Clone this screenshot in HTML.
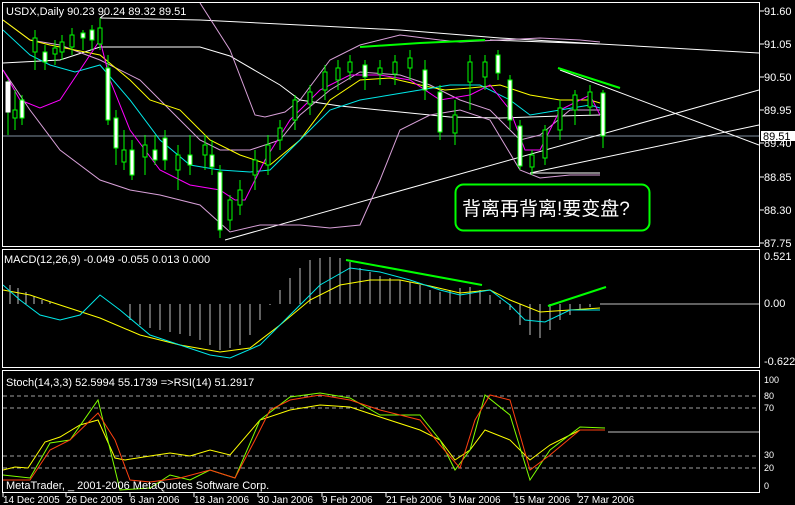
<!DOCTYPE html>
<html><head><meta charset="utf-8"><style>
html,body{margin:0;padding:0;background:#000;width:795px;height:505px;overflow:hidden}
svg{display:block;font-family:"Liberation Sans","Noto Sans CJK SC",sans-serif}
</style></head><body>
<svg width="795" height="505" viewBox="0 0 795 505" xmlns="http://www.w3.org/2000/svg">
<rect width="795" height="505" fill="#000"/>
<!-- panel borders -->
<g fill="none" stroke="#fff" stroke-width="1">
<rect x="2.5" y="2.5" width="757" height="244"/>
<rect x="2.5" y="249.5" width="757" height="118"/>
<rect x="2.5" y="370.5" width="757" height="122"/>
</g>
<!-- right axis -->
<g fill="#fff" font-size="11">
<g stroke="#fff"><line x1="760" y1="11" x2="764" y2="11"/><line x1="760" y1="44" x2="764" y2="44"/><line x1="760" y1="77" x2="764" y2="77"/><line x1="760" y1="110" x2="764" y2="110"/><line x1="760" y1="143" x2="764" y2="143"/><line x1="760" y1="177" x2="764" y2="177"/><line x1="760" y1="210" x2="764" y2="210"/><line x1="760" y1="243" x2="764" y2="243"/></g>
<text x="764" y="15">91.60</text><text x="764" y="48">91.05</text><text x="764" y="81">90.50</text><text x="764" y="114">89.95</text><text x="764" y="147">89.40</text><text x="764" y="181">88.85</text><text x="764" y="214">88.30</text><text x="764" y="247">87.75</text>
<rect x="761" y="131" width="34" height="10" fill="#fff"/><text x="763" y="140" fill="#000">89.51</text>
<text x="764" y="260">0.521</text><text x="764" y="307">0.00</text><text x="764" y="365">-0.622</text>
<text x="764" y="383" font-size="9">100</text><text x="764" y="399" font-size="9">80</text><text x="764" y="411" font-size="9">70</text><text x="764" y="458" font-size="9">30</text><text x="764" y="471" font-size="9">20</text><text x="764" y="489" font-size="9">0</text>
</g>
<!-- bottom dates -->
<g fill="#fff" font-size="10">
<text x="3" y="503">14 Dec 2005</text><text x="66" y="503">26 Dec 2005</text><text x="130" y="503">6 Jan 2006</text><text x="194" y="503">18 Jan 2006</text><text x="258" y="503">30 Jan 2006</text><text x="322" y="503">9 Feb 2006</text><text x="386" y="503">21 Feb 2006</text><text x="450" y="503">3 Mar 2006</text><text x="514" y="503">15 Mar 2006</text><text x="578" y="503">27 Mar 2006</text>
</g>
<g stroke="#fff"><line x1="3" y1="493" x2="3" y2="497"/><line x1="66" y1="493" x2="66" y2="497"/><line x1="130" y1="493" x2="130" y2="497"/><line x1="194" y1="493" x2="194" y2="497"/><line x1="258" y1="493" x2="258" y2="497"/><line x1="322" y1="493" x2="322" y2="497"/><line x1="386" y1="493" x2="386" y2="497"/><line x1="450" y1="493" x2="450" y2="497"/><line x1="514" y1="493" x2="514" y2="497"/><line x1="578" y1="493" x2="578" y2="497"/></g>

<!-- main panel -->
<svg x="3" y="3" width="756" height="243" viewBox="3 3 756 243" overflow="hidden">
<line x1="3" y1="136" x2="759" y2="136" stroke="#8090a0"/>
<!-- trend lines white -->
<g stroke="#fff" fill="none">
<polyline points="100,18 200,20 300,25 400,30 500,38 600,44 759,53"/>
<line x1="490" y1="40" x2="600" y2="44"/>
<line x1="225" y1="240" x2="759" y2="90"/>
<line x1="530" y1="173" x2="759" y2="125"/>
<line x1="560" y1="70" x2="759" y2="145"/>
<line x1="100" y1="18" x2="105" y2="14"/>
<line x1="530" y1="173" x2="600" y2="173"/>
<polyline points="3,63 60,60 100,47 200,47 230,56 280,85 300,100 340,106 400,112 450,117 500,118 560,116 600,115"/>
</g>
<!-- Bollinger pink -->
<g stroke="#d8a0d8" fill="none">
<polyline points="200,3 230,50 255,115 265,117 285,112 300,100 330,60 360,45 400,35 440,40 460,42 500,40 540,38 580,40 600,42"/>
<polyline points="3,70 30,110 60,150 100,180 130,190 160,195 200,205 230,232 260,225 300,225 330,228 360,225 380,180 400,130 430,115 460,110 490,120 520,170 540,178 570,175 600,175"/>
<polyline points="3,20 30,40 60,45 100,60 140,80 170,110 200,140 220,150 250,150 280,140 300,115 330,90 360,72 400,75 430,85 460,100 490,110 520,140 540,135 570,110 600,110"/>
</g>
<!-- MAs -->
<polyline fill="none" stroke="#ffff00" points="3,20 30,40 50,45 75,50 100,55 130,80 150,100 180,110 210,140 240,155 270,165 300,140 330,100 360,80 390,78 420,85 445,90 470,88 500,85 530,95 560,100 590,100 600,103"/>
<polyline fill="none" stroke="#00e8e8" points="3,30 30,55 50,65 75,72 100,65 130,100 160,140 190,165 220,170 250,172 270,170 300,140 330,110 360,100 390,95 420,90 450,85 480,85 510,100 530,115 560,110 590,105 600,108"/>
<polyline fill="none" stroke="#ff00ff" points="3,70 20,100 40,108 60,100 80,70 100,40 110,80 130,130 160,170 190,185 220,190 235,200 245,200 265,160 290,120 320,90 350,75 380,75 410,80 440,100 470,95 490,85 510,110 525,150 540,150 560,110 590,95 600,115"/>
<!-- candles approximate -->
<g stroke="#00ff00" fill="#000">
<line x1="8" y1="80" x2="8" y2="135"/><rect x="6" y="82" width="4" height="30" fill="#fff" stroke="#fff"/>
<line x1="15" y1="90" x2="15" y2="130"/><rect x="13" y="110" width="4" height="8"/>
<line x1="22" y1="95" x2="22" y2="125"/><rect x="20" y="100" width="4" height="18" fill="#fff"/>
<line x1="35" y1="30" x2="35" y2="70"/><rect x="33" y="38" width="4" height="14"/>
<line x1="45" y1="45" x2="45" y2="70"/><rect x="43" y="52" width="4" height="10" fill="#fff"/>
<line x1="55" y1="40" x2="55" y2="65"/><rect x="53" y="48" width="4" height="6"/>
<line x1="62" y1="35" x2="62" y2="60"/><rect x="60" y="42" width="4" height="10"/>
<line x1="72" y1="28" x2="72" y2="55"/><rect x="70" y="35" width="4" height="12"/>
<line x1="83" y1="30" x2="83" y2="50"/><rect x="81" y="33" width="4" height="5" fill="#fff"/>
<line x1="92" y1="25" x2="92" y2="50"/><rect x="90" y="30" width="4" height="10" fill="#fff"/>
<line x1="100" y1="18" x2="100" y2="50"/><rect x="98" y="28" width="4" height="16"/>
<line x1="108" y1="55" x2="108" y2="125"/><rect x="106" y="68" width="4" height="52" fill="#fff"/>
<line x1="116" y1="110" x2="116" y2="165"/><rect x="114" y="118" width="4" height="30" fill="#fff"/>
<line x1="124" y1="130" x2="124" y2="170"/><rect x="122" y="150" width="4" height="12"/>
<line x1="132" y1="140" x2="132" y2="180"/><rect x="130" y="150" width="4" height="25" fill="#fff"/>
<line x1="145" y1="135" x2="145" y2="175"/><rect x="143" y="145" width="4" height="12"/>
<line x1="155" y1="135" x2="155" y2="165"/><rect x="153" y="150" width="4" height="10" fill="#fff"/>
<line x1="165" y1="130" x2="165" y2="170"/><rect x="163" y="138" width="4" height="22" fill="#fff"/>
<line x1="178" y1="145" x2="178" y2="190"/><rect x="176" y="155" width="4" height="15"/>
<line x1="190" y1="135" x2="190" y2="175"/><rect x="188" y="155" width="4" height="10" fill="#fff"/>
<line x1="205" y1="135" x2="205" y2="170"/><rect x="203" y="145" width="4" height="10"/>
<line x1="212" y1="140" x2="212" y2="175"/><rect x="210" y="155" width="4" height="12" fill="#fff"/>
<line x1="220" y1="165" x2="220" y2="238"/><rect x="218" y="172" width="4" height="58" fill="#fff"/>
<line x1="230" y1="195" x2="230" y2="230"/><rect x="228" y="200" width="4" height="20"/>
<line x1="240" y1="180" x2="240" y2="215"/><rect x="238" y="190" width="4" height="15"/>
<line x1="255" y1="150" x2="255" y2="190"/><rect x="253" y="160" width="4" height="15"/>
<line x1="268" y1="135" x2="268" y2="175"/><rect x="266" y="145" width="4" height="20"/>
<line x1="280" y1="120" x2="280" y2="150"/><rect x="278" y="128" width="4" height="12"/>
<line x1="295" y1="95" x2="295" y2="130"/><rect x="293" y="100" width="4" height="20"/>
<line x1="310" y1="85" x2="310" y2="115"/><rect x="308" y="92" width="4" height="12"/>
<line x1="325" y1="65" x2="325" y2="100"/><rect x="323" y="72" width="4" height="18"/>
<line x1="338" y1="60" x2="338" y2="90"/><rect x="336" y="68" width="4" height="12"/>
<line x1="350" y1="55" x2="350" y2="80"/><rect x="348" y="62" width="4" height="10"/>
<line x1="365" y1="60" x2="365" y2="90"/><rect x="363" y="65" width="4" height="12" fill="#fff"/>
<line x1="380" y1="60" x2="380" y2="85"/><rect x="378" y="68" width="4" height="6"/>
<line x1="395" y1="55" x2="395" y2="85"/><rect x="393" y="62" width="4" height="12"/>
<line x1="410" y1="50" x2="410" y2="80"/><rect x="408" y="58" width="4" height="10"/>
<line x1="425" y1="60" x2="425" y2="100"/><rect x="423" y="70" width="4" height="20" fill="#fff"/>
<line x1="440" y1="85" x2="440" y2="140"/><rect x="438" y="92" width="4" height="40" fill="#fff"/>
<line x1="455" y1="100" x2="455" y2="145"/><rect x="453" y="115" width="4" height="18"/>
<line x1="470" y1="55" x2="470" y2="110"/><rect x="468" y="62" width="4" height="20"/>
<line x1="485" y1="55" x2="485" y2="90"/><rect x="483" y="62" width="4" height="15"/>
<line x1="498" y1="50" x2="498" y2="80"/><rect x="496" y="55" width="4" height="18" fill="#fff"/>
<line x1="510" y1="75" x2="510" y2="130"/><rect x="508" y="80" width="4" height="40" fill="#fff"/>
<line x1="520" y1="120" x2="520" y2="170"/><rect x="518" y="126" width="4" height="40" fill="#fff"/>
<line x1="532" y1="150" x2="532" y2="175"/><rect x="530" y="155" width="4" height="12"/>
<line x1="545" y1="125" x2="545" y2="165"/><rect x="543" y="130" width="4" height="28"/>
<line x1="560" y1="100" x2="560" y2="140"/><rect x="558" y="108" width="4" height="22"/>
<line x1="575" y1="90" x2="575" y2="125"/><rect x="573" y="95" width="4" height="15"/>
<line x1="590" y1="85" x2="590" y2="115"/><rect x="588" y="92" width="4" height="15"/>
<line x1="603" y1="90" x2="603" y2="148"/><rect x="601" y="93" width="4" height="43" fill="#fff"/>
</g>
<g stroke="#00ff00" stroke-width="2" fill="none">
<polyline points="360,47 420,43 485,40"/>
<polyline points="558,68 620,88"/>
</g>
</svg>
<text x="6" y="15" fill="#fff" font-size="11">USDX,Daily  90.23 90.24 89.32 89.51</text>
<rect x="455.5" y="184.5" width="194" height="46" rx="8" fill="#000" stroke="#00ff00" stroke-width="2"/>
<text x="462" y="215" fill="#fff" font-size="19">背离再背离!要变盘?</text>

<!-- MACD -->
<svg x="3" y="250" width="756" height="117" viewBox="3 250 756 117" overflow="hidden">
<text x="4" y="263" fill="#fff" font-size="11">MACD(12,26,9) -0.049 -0.055 0.013 0.000</text>
<line x1="600" y1="304" x2="759" y2="304" stroke="#c0c0c0"/>
<g stroke="#c0c0c0">
<path d="M10 304V285M18 304V288M26 304V292M34 304V296M42 304V300M50 304V302M130 304V320M140 304V325M150 304V328M160 304V330M170 304V332M180 304V334M190 304V336M200 304V340M210 304V345M220 304V350M230 304V348M240 304V345M250 304V335M260 304V320M270 304V305M280 304V290M290 304V278M300 304V268M310 304V260M320 304V258M330 304V257M340 304V258M350 304V262M360 304V268M370 304V272M380 304V276M390 304V278M400 304V280M410 304V282M420 304V285M430 304V290M440 304V292M450 304V290M460 304V288M470 304V287M480 304V290M490 304V295M500 304V300M510 304V310M520 304V325M530 304V335M540 304V338M550 304V330M560 304V320M570 304V315M580 304V310M590 304V307"/>
</g>
<polyline fill="none" stroke="#ffff00" points="3,290 30,295 60,305 100,318 140,335 180,345 220,352 250,348 280,325 310,300 340,285 370,280 400,280 430,286 460,293 490,290 510,300 540,312 570,310 600,308"/>
<polyline fill="none" stroke="#00e8e8" points="3,285 20,300 40,315 60,320 80,315 100,295 120,310 150,335 180,345 210,355 230,358 260,345 290,315 320,285 350,268 380,272 410,280 440,290 460,295 490,290 510,305 525,320 545,322 570,310 600,310"/>
<g stroke="#00ff00" stroke-width="2" fill="none">
<polyline points="346,260 482,285"/><polyline points="548,306 606,287"/>
</g>
</svg>

<!-- Stoch -->
<svg x="3" y="371" width="756" height="121" viewBox="3 371 756 121" overflow="hidden">
<text x="6" y="386" fill="#fff" font-size="11">Stoch(14,3,3) 52.5994 55.1739  =&gt;RSI(14) 51.2917</text>
<g stroke="#a0a0a0" stroke-dasharray="4,3"><line x1="3" y1="396" x2="759" y2="396"/><line x1="3" y1="408" x2="759" y2="408"/><line x1="3" y1="456" x2="759" y2="456"/><line x1="3" y1="468" x2="759" y2="468"/></g>
<line x1="608" y1="432" x2="759" y2="432" stroke="#c0c0c0"/>
<polyline fill="none" stroke="#ffff00" points="3,470 15,467 28,468 45,442 60,437 80,425 98,420 115,458 125,460 150,456 170,453 190,456 210,450 230,455 260,420 290,410 320,405 350,407 380,417 420,430 440,440 455,460 470,450 485,430 510,440 530,460 550,445 580,430 605,430"/>
<polyline fill="none" stroke="#80ff00" points="3,475 30,478 50,443 70,440 98,400 120,490 150,488 170,475 190,480 210,470 235,478 260,420 290,397 320,393 350,398 380,415 420,415 440,440 455,470 470,450 485,395 510,415 530,480 550,450 580,427 605,428"/>
<polyline fill="none" stroke="#ff4010" points="3,480 30,480 50,450 70,440 98,413 115,440 130,480 150,482 180,478 210,470 235,478 255,440 270,410 290,400 320,395 350,400 380,410 420,420 440,445 460,468 475,420 490,395 510,400 530,470 550,455 580,430 605,430"/>
<text x="6" y="489" fill="#fff" font-size="11">MetaTrader, _ 2001-2006 MetaQuotes Software Corp.</text>
</svg>
</svg>
</body></html>
